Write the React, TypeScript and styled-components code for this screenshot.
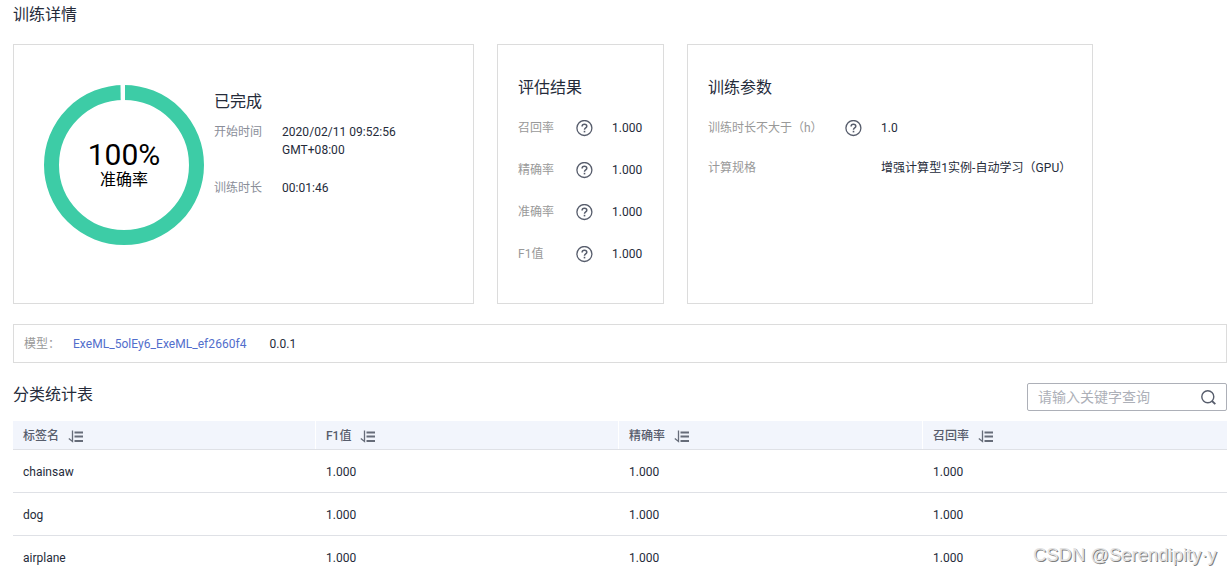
import React from 'react';
import styled, { createGlobalStyle } from 'styled-components';

const GlobalStyle = createGlobalStyle`
  * { box-sizing: border-box; }
  body {
    margin: 0;
    background: #fff;
    color: #252b3a;
    font: 12px/18px Roboto, "Noto Sans CJK SC", sans-serif;
    overflow: hidden;
  }
`;

const Page = styled.main`
  position: relative;
  display: flex;
  flex-direction: column;
  width: 1232px;
  height: 575px;
  padding: 2px 5px 0 13px;
  overflow: hidden;
  > * { flex-shrink: 0; }
`;

const Title = styled.h2`
  margin: 0;
  font-size: 16px;
  font-weight: 400;
  line-height: 25px;
  white-space: nowrap;
`;

const Cards = styled.div`
  display: flex;
  gap: 23px;
  margin-top: 17px;
`;

const Card = styled.section<{ $width: number }>`
  width: ${(p) => p.$width}px;
  height: 260px;
  border: 1px solid #dcdcdc;
  padding: 30px 20px 0;
`;

const StatusCard = styled(Card)`
  display: flex;
  gap: 10px;
  padding: 40px 30px 0;
`;

const Gauge = styled.div`
  display: grid;
  width: 160px;
  height: 160px;
  > * { grid-area: 1 / 1; }
`;

const GaugeText = styled.div`
  display: flex;
  flex-direction: column;
  align-items: center;
  padding-top: 55px;
  color: #000;
  font-size: 16px;
  line-height: 20px;
`;

const Percent = styled.strong`
  font-size: 30px;
  font-weight: 400;
  line-height: 30px;
`;

const StatusInfo = styled.div`
  padding-top: 4px;
`;

const InfoRow = styled.div<{ $top: number }>`
  display: flex;
  margin-top: ${(p) => p.$top}px;
`;

const Label = styled.span<{ $width: number; $tone?: string }>`
  flex: none;
  width: ${(p) => p.$width}px;
  color: ${(p) => p.$tone ?? '#999'};
  white-space: nowrap;
`;

const Value = styled.span`
  white-space: nowrap;
  letter-spacing: 0.04px;
`;

const MetricRow = styled.div<{ $height: number }>`
  display: flex;
  align-items: center;
  height: ${(p) => p.$height}px;
`;

const IconSlot = styled.span<{ $width: number }>`
  display: flex;
  flex: none;
  width: ${(p) => p.$width}px;
`;

const Metrics = styled.div`
  padding-top: 7px;
`;

const ModelBar = styled.div`
  display: flex;
  align-items: center;
  height: 39px;
  margin-top: 20px;
  padding-left: 10px;
  border: 1px solid #dcdcdc;
`;

const ModelLink = styled.a`
  width: 196.5px;
  color: #526ecc;
  letter-spacing: 0.05px;
`;

const TableBar = styled.div`
  display: flex;
  justify-content: space-between;
  height: 58px;
  padding-top: 20px;
`;

const TableTitle = styled(Title)`
  line-height: 23px;
`;

const Search = styled.div`
  display: flex;
  align-items: center;
  justify-content: space-between;
  width: 200px;
  height: 28px;
  padding: 0 10px 0 10px;
  border: 1px solid #adb0b8;
  border-radius: 2px;
  color: #adb0b8;
  font-size: 14px;
`;

const TableRow = styled.div<{ $head?: boolean }>`
  display: grid;
  grid-template-columns: 303px 303px 304px 304px;
  height: ${(p) => (p.$head ? 29 : 43)}px;
  border-bottom: 1px solid #dfe1e6;
  background: ${(p) => (p.$head ? '#f2f5fc' : 'transparent')};
  color: ${(p) => (p.$head ? '#575d6c' : '#252b3a')};
  font-weight: ${(p) => (p.$head ? 500 : 400)};
`;

const Cell = styled.div<{ $divided?: boolean }>`
  display: flex;
  align-items: center;
  gap: 8.5px;
  padding: 2px 0 0 10px;
  border-right: ${(p) => (p.$divided ? '1px solid #fff' : '0')};
`;

const Watermark = styled.div`
  position: absolute;
  top: 543px;
  left: 1033px;
  color: #e2e2e2;
  font: 18.4px/24px "Liberation Sans", sans-serif;
  letter-spacing: 0.03px;
  text-shadow: 1px 1px 0 #808080;
  white-space: nowrap;
`;

const HelpIcon = () => (
  <svg width="17" height="17" viewBox="0 0 17 17" fill="none" stroke="#575d6c">
    <circle cx="8.4" cy="8" r="7.5" strokeWidth="1.3" />
    <path d="M6.1 6.5C6.1 5.1 7 4.3 8.4 4.3s2.4.8 2.4 2c0 1.6-2.3 1.7-2.3 3.4" strokeWidth="1.5" />
    <path d="M8.5 10.8v1.6" strokeWidth="1.6" />
  </svg>
);

const SortIcon = () => (
  <svg width="15" height="13" viewBox="0 0 15 13" fill="none" stroke="#666c79">
    <path d="M4.5 .5v11L.8 8.5" strokeWidth="1.3" />
    <path d="M6.5 2.5H15M6.5 6.5H15M6.5 11H15" strokeWidth="2" />
  </svg>
);

const SearchIcon = () => (
  <svg width="15" height="15" viewBox="0 0 15 15" fill="none" stroke="#575d6c" strokeWidth="1.4">
    <circle cx="6.8" cy="6.8" r="6" />
    <path d="M11 11l3.3 3.2" strokeWidth="1.8" />
  </svg>
);

const metrics = ['召回率', '精确率', '准确率', 'F1值'];
const columns = ['标签名', 'F1值', '精确率', '召回率'];
const labels = ['chainsaw', 'dog', 'airplane'];

export default function App() {
  return (
    <>
      <GlobalStyle />
      <Page>
        <Title>训练详情</Title>
        <Cards>
          <StatusCard $width={461}>
            <Gauge>
              <svg width="160" height="160" viewBox="0 0 160 160">
                <circle cx="80" cy="80" r="72.5" fill="none" stroke="#3dcca6" strokeWidth="15" />
                <path d="M76.5 0H81V16H76.7Z" fill="#fff" />
              </svg>
              <GaugeText>
                <Percent>100%</Percent>
                准确率
              </GaugeText>
            </Gauge>
            <StatusInfo>
              <Title>已完成</Title>
              <InfoRow $top={9}>
                <Label $width={68} $tone="#8a8e99">开始时间</Label>
                <Value>2020/02/11 09:52:56<br />GMT+08:00</Value>
              </InfoRow>
              <InfoRow $top={20}>
                <Label $width={68} $tone="#8a8e99">训练时长</Label>
                <Value>00:01:46</Value>
              </InfoRow>
            </StatusInfo>
          </StatusCard>
          <Card $width={167}>
            <Title>评估结果</Title>
            <Metrics>
              {metrics.map((name) => (
                <MetricRow key={name} $height={42}>
                  <Label $width={58}>{name}</Label>
                  <IconSlot $width={36}><HelpIcon /></IconSlot>
                  <Value>1.000</Value>
                </MetricRow>
              ))}
            </Metrics>
          </Card>
          <Card $width={406}>
            <Title>训练参数</Title>
            <Metrics>
              <MetricRow $height={42}>
                <Label $width={137}>训练时长不大于（h）</Label>
                <IconSlot $width={36}><HelpIcon /></IconSlot>
                <Value>1.0</Value>
              </MetricRow>
              <MetricRow $height={38}>
                <Label $width={173}>计算规格</Label>
                <Value>增强计算型1实例-自动学习（GPU）</Value>
              </MetricRow>
            </Metrics>
          </Card>
        </Cards>
        <ModelBar>
          <Label $width={49}>模型：</Label>
          <ModelLink>ExeML_5olEy6_ExeML_ef2660f4</ModelLink>
          <Value>0.0.1</Value>
        </ModelBar>
        <TableBar>
          <TableTitle>分类统计表</TableTitle>
          <Search>
            请输入关键字查询
            <SearchIcon />
          </Search>
        </TableBar>
        <TableRow $head>
          {columns.map((name, i) => (
            <Cell key={name} $divided={i < 3}>{name}<SortIcon /></Cell>
          ))}
        </TableRow>
        {labels.map((name) => (
          <TableRow key={name}>
            <Cell>{name}</Cell>
            <Cell>1.000</Cell>
            <Cell>1.000</Cell>
            <Cell>1.000</Cell>
          </TableRow>
        ))}
        <Watermark>CSDN @Serendipity·y</Watermark>
      </Page>
    </>
  );
}
